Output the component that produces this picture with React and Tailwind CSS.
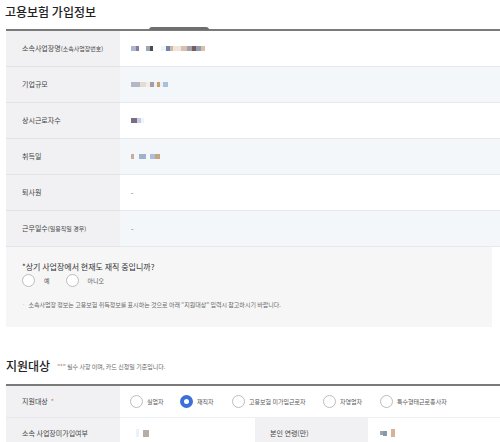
import React from 'react';

// blurred (pixelated) values from the screenshot
function Blur({ blocks }) {
  return (
    <div className="flex items-center h-[8px]">
      {blocks.map(([w, c, h], i) => (
        <span key={i} className="block" style={{ width: w, height: h || 5, background: c }} />
      ))}
    </div>
  );
}

function Radio({ label, checked, w }) {
  return (
    <label className={'flex items-center gap-[4px] shrink-0 ' + w}>
      {checked ? (
        <span className="w-[13px] h-[13px] rounded-full border-[4px] border-[#3b6fd9] bg-white" />
      ) : (
        <span className="w-[13px] h-[13px] rounded-full border border-[#bdbdbd] bg-white" />
      )}
      <span className="text-[6px] text-[#555]">{label}</span>
    </label>
  );
}

const rows = [
  {
    label: (
      <>
        소속사업장명 <span className="text-[6px]">(소속사업장번호)</span>
      </>
    ),
    value: (
      <Blur
        blocks={[
          [5, '#a9b8d0'], [3, '#8a7a9c'], [7, '#ffffff'], [4, '#9aa7b4'], [3, '#4d4d4d'], [8, '#ffffff'],
          [5, '#e9f6f9'], [4, '#7384a8'], [3, '#d9b59b'], [8, '#efe4dc'], [6, '#d8c0b0'], [5, '#a4a0a8'],
          [4, '#7a5b60'], [5, '#8f9fb1'], [4, '#d8c2a6'],
        ]}
      />
    ),
    alt: false,
  },
  {
    label: '기업규모',
    value: (
      <Blur
        blocks={[
          [9, '#b5b7c7'], [6, '#e3dcd2'], [4, '#f1ece6'], [4, '#a49ca6'], [3, '#eef0f4'], [3, '#c9a06a'], [3, '#eef0f4'], [5, '#a9c0dc'],
        ]}
      />
    ),
    alt: true,
  },
  {
    label: '상시근로자수',
    value: <Blur blocks={[[6, '#7c6b85'], [4, '#c9cde2'], [3, '#eef4fb']]} />,
    alt: false,
  },
  {
    label: '취득일',
    value: (
      <Blur
        blocks={[[3, '#c8ad98'], [5, 'transparent'], [7, '#9fb2c9'], [4, 'transparent'], [5, '#a8c0dc'], [5, '#c6a682']]}
      />
    ),
    alt: true,
  },
  { label: '퇴사원', value: <span>-</span>, alt: false },
  {
    label: (
      <>
        근무일수<span className="text-[6px]">(일용직일 경우)</span>
      </>
    ),
    value: <span>-</span>,
    alt: true,
  },
];

export default function App() {
  return (
    <div className="w-[500px] h-[442px] overflow-hidden bg-white font-['Noto_Sans_CJK_KR',sans-serif] text-[#333] pl-[6px]">
      {/* 고용보험 가입정보 */}
      <h2 className="pt-[4px] h-[29px] text-[12px] font-medium text-[#222] leading-[16px] -ml-[1px]">고용보험 가입정보</h2>

      <div className="relative border-t-2 border-[#7a7a7a]">
        <span className="absolute -top-[4px] left-[143px] w-[60px] h-[3px] bg-[#6e6e6e] rounded-t-[6px]" />
        {rows.map((r, i) => (
          <div key={i} className="flex h-[36px]">
            <div className="w-[114px] shrink-0 bg-[#f1f1f3] border-b border-[#e4e4e8] flex items-center pl-[16px] text-[7px] text-[#444]">
              {r.label}
            </div>
            <div
              className={
                'flex-1 flex items-center pl-[11px] text-[7px] text-[#555] border-b border-[#e6e9ee] ' +
                (r.alt ? 'bg-[#f4f7fa]' : 'bg-white')
              }
            >
              {r.value}
            </div>
          </div>
        ))}
      </div>

      <div className="mr-[8px] h-[80px] bg-[#f6f6f6] pt-[14px] pl-[16px]">
        <p className="text-[8px] text-[#333] leading-[11px]">*상기 사업장에서 현재도 재직 중입니까?</p>
        <div className="flex items-center gap-[10px] mt-[2px]">
          <label className="flex items-center gap-[9px]">
            <span className="w-[13px] h-[13px] rounded-full border border-[#bdbdbd] bg-white" />
            <span className="text-[6px] text-[#555]">예</span>
          </label>
          <label className="flex items-center gap-[9px] ml-[6px]">
            <span className="w-[13px] h-[13px] rounded-full border border-[#bdbdbd] bg-white" />
            <span className="text-[6px] text-[#555]">아니오</span>
          </label>
        </div>
        <p className="mt-[14px] text-[6px] text-[#666] leading-[8px]">
          <span className="text-[#aaa] mr-[3px]">·</span>소속사업장 정보는 고용보험 취득정보를 표시하는 것으로 아래 “지원대상” 입력시 참고하시기 바랍니다.
        </p>
      </div>

      {/* 지원대상 */}
      <div className="flex items-end gap-[7px] mt-[29px] h-[18px] mb-[10px]">
        <h2 className="text-[12px] font-medium text-[#222] leading-[16px]">지원대상</h2>
        <span className="text-[6px] text-[#666] leading-[12px] mb-[1px]">
          “<span className="text-[#e0703a]">*</span>” 필수 사항 이며, 카드 신청일 기준입니다.
        </span>
      </div>

      <div className="border-t-2 border-[#7a7a7a]">
        <div className="flex h-[32px]">
          <div className="w-[114px] shrink-0 bg-[#f1f1f3] border-b border-[#e8e8ec] flex items-center pl-[16px] text-[7px] text-[#444]">
            지원대상 <span className="ml-[3px] text-[#e0703a]">*</span>
          </div>
          <div className="flex-1 flex items-center pl-[10px] border-b border-[#eceef1] bg-white">
            <Radio label="실업자" w="w-[50px]" />
            <Radio label="재직자" checked w="w-[52px]" />
            <Radio label="고용보험 미가입근로자" w="w-[91px]" />
            <Radio label="자영업자" w="w-[57px]" />
            <Radio label="특수형태근로종사자" w="w-[80px]" />
          </div>
        </div>
        <div className="flex h-[30px]">
          <div className="w-[114px] shrink-0 bg-[#f1f1f3] flex items-center pl-[16px] text-[7px] text-[#444]">
            소속 사업장미가입여부
          </div>
          <div className="w-[135px] shrink-0 flex items-center pl-[16px] bg-white">
            <Blur blocks={[[3, '#e8f3fb', 8], [4, 'transparent'], [6, '#b7aca6', 7]]} />
          </div>
          <div className="w-[113px] shrink-0 bg-[#f1f1f3] flex items-center pl-[15px] text-[7px] text-[#444]">
            본인 연령(만)
          </div>
          <div className="flex-1 flex items-center pl-[12px] bg-white">
            <Blur blocks={[[3, '#9aa6b0', 4], [4, '#8a97a4', 5], [4, 'transparent'], [4, '#d6b298', 8]]} />
          </div>
        </div>
      </div>
    </div>
  );
}
